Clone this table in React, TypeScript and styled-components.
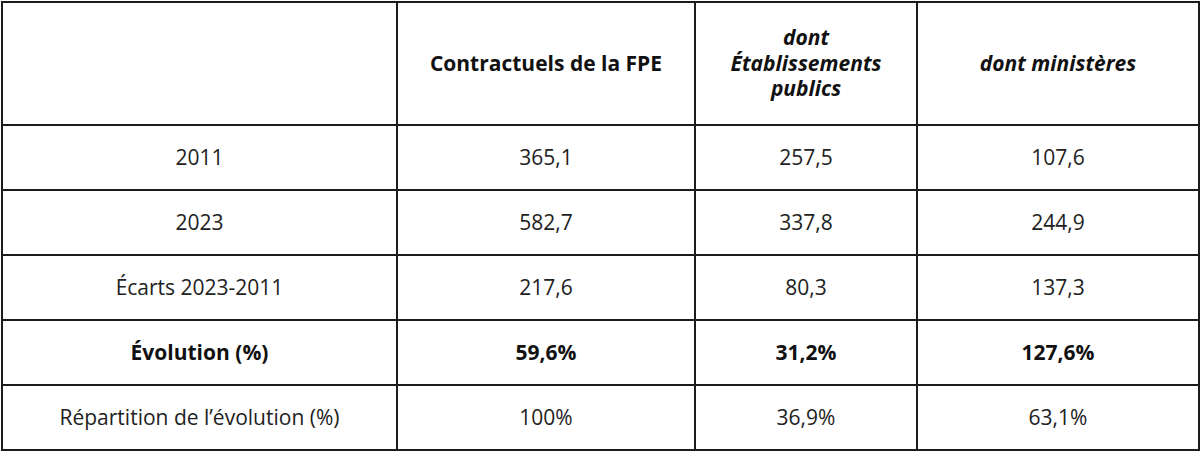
import React from "react";
import styled, { createGlobalStyle } from "styled-components";

const Global = createGlobalStyle`
  html, body { margin: 0; padding: 0; background: #fff; }
  body { font-family: "Open Sans", "Noto Sans", sans-serif; color: #222; }
`;

const Wrap = styled.div`
  padding: 1px 0 0 1px;
`;

const Table = styled.table`
  border-collapse: collapse;
  table-layout: fixed;
  width: 1197px;
  font-size: 21px;
  line-height: 25.5px;
`;

const HeadCell = styled.th<{ $italic?: boolean }>`
  border: 2px solid #1c1c1c;
  height: 121px;
  padding: 0 20px;
  text-align: center;
  vertical-align: middle;
  font-weight: 700;
  font-style: ${(p) => (p.$italic ? "italic" : "normal")};
  color: #111;
`;

const Cell = styled.td<{ $bold?: boolean }>`
  border: 2px solid #1c1c1c;
  height: 63px;
  padding: 0 8px;
  text-align: center;
  vertical-align: middle;
  font-weight: ${(p) => (p.$bold ? 700 : 400)};
  color: ${(p) => (p.$bold ? "#111" : "#222")};
`;

const rows: { label: string; values: string[]; bold?: boolean }[] = [
  { label: "2011", values: ["365,1", "257,5", "107,6"] },
  { label: "2023", values: ["582,7", "337,8", "244,9"] },
  { label: "Écarts 2023-2011", values: ["217,6", "80,3", "137,3"] },
  { label: "Évolution (%)", values: ["59,6%", "31,2%", "127,6%"], bold: true },
  { label: "Répartition de l’évolution (%)", values: ["100%", "36,9%", "63,1%"] },
];

export default function App() {
  return (
    <Wrap>
      <Global />
      <Table>
        <colgroup>
          <col style={{ width: 395 }} />
          <col style={{ width: 298 }} />
          <col style={{ width: 222 }} />
          <col style={{ width: 282 }} />
        </colgroup>
        <thead>
          <tr>
            <HeadCell />
            <HeadCell>Contractuels de la FPE</HeadCell>
            <HeadCell $italic>dont Établissements publics</HeadCell>
            <HeadCell $italic>dont ministères</HeadCell>
          </tr>
        </thead>
        <tbody>
          {rows.map((r) => (
            <tr key={r.label}>
              <Cell $bold={r.bold}>{r.label}</Cell>
              {r.values.map((v, i) => (
                <Cell key={i} $bold={r.bold}>
                  {v}
                </Cell>
              ))}
            </tr>
          ))}
        </tbody>
      </Table>
    </Wrap>
  );
}
